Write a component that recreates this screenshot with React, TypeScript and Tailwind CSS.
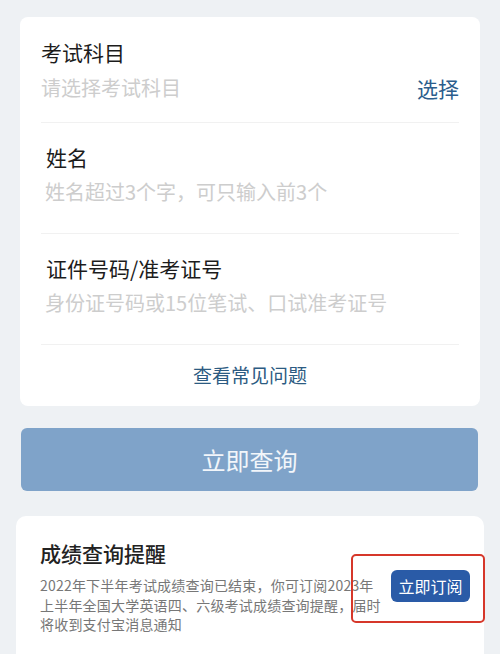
export default function App() {
    return (
        <div
            className="min-h-[654px] h-[654px] overflow-hidden bg-[#eef1f4] pt-[17px]"
            style={{ fontFamily: '"Noto Sans CJK SC", "Noto Sans", sans-serif' }}
        >
            {/* Query form */}
            <div className="mx-[20px] bg-white rounded-[8px] pl-[21px] pr-[21px]">
                <div className="pt-[21px] pb-[20px] border-b border-[#f1f1f1]">
                    <div className="text-[21px] leading-[28px] text-[#1c1c1c]">考试科目</div>
                    <div className="mt-[8px] flex items-center justify-between">
                        <span className="text-[20px] leading-[28px] text-[#cdcdcd]">请选择考试科目</span>
                        <span className="text-[21px] leading-[28px] text-[#2b5d8c]">选择</span>
                    </div>
                </div>

                <div className="pt-[20px] pb-[27px] border-b border-[#f1f1f1]">
                    <div className="pl-[5px] text-[21px] leading-[28px] text-[#1c1c1c]">姓名</div>
                    <div className="mt-[7px] pl-[4px] text-[20px] leading-[28px] text-[#cdcdcd]">
                        姓名超过3个字，可只输入前3个
                    </div>
                </div>

                <div className="pt-[20px] pb-[27px] border-b border-[#f1f1f1]">
                    <div className="pl-[5px] text-[21px] leading-[28px] text-[#1c1c1c]">证件号码/准考证号</div>
                    <div className="mt-[7px] pl-[4px] text-[20px] leading-[28px] text-[#cdcdcd]">
                        身份证号码或15位笔试、口试准考证号
                    </div>
                </div>

                <div className="pt-[16px] pb-[17px] text-center text-[19px] leading-[28px] text-[#2c5b82]">
                    查看常见问题
                </div>
            </div>

            {/* Submit */}
            <button className="mt-[22px] ml-[21px] w-[457px] h-[63px] rounded-[6px] bg-[#7fa3c9] text-[24px] text-white/90 flex items-center justify-center">
                立即查询
            </button>

            {/* Reminder */}
            <div className="relative mt-[25px] mx-[16px] bg-white rounded-[10px] pl-[24px] pt-[23px] pb-[30px]">
                <div className="text-[21px] leading-[28px] font-medium text-[#222]">成绩查询提醒</div>
                <div className="mt-[9px] flex items-start">
                    <p className="w-[341px] text-[14px] leading-[19.5px] text-[#777] tracking-[0.2px]">
                        2022年下半年考试成绩查询已结束，你可订阅2023年上半年全国大学英语四、六级考试成绩查询提醒，届时将收到支付宝消息通知
                    </p>
                    <button className="ml-[10px] -mt-[6px] w-[79px] h-[32px] rounded-[6px] bg-[#2a5ba7] text-white text-[16px] flex items-center justify-center">
                        立即订阅
                    </button>
                </div>

                {/* annotation box */}
                <div className="absolute left-[335px] top-[38px] w-[134px] h-[69px] border-2 border-[#d6372a] rounded-[5px]" />
            </div>
        </div>
    )
}
